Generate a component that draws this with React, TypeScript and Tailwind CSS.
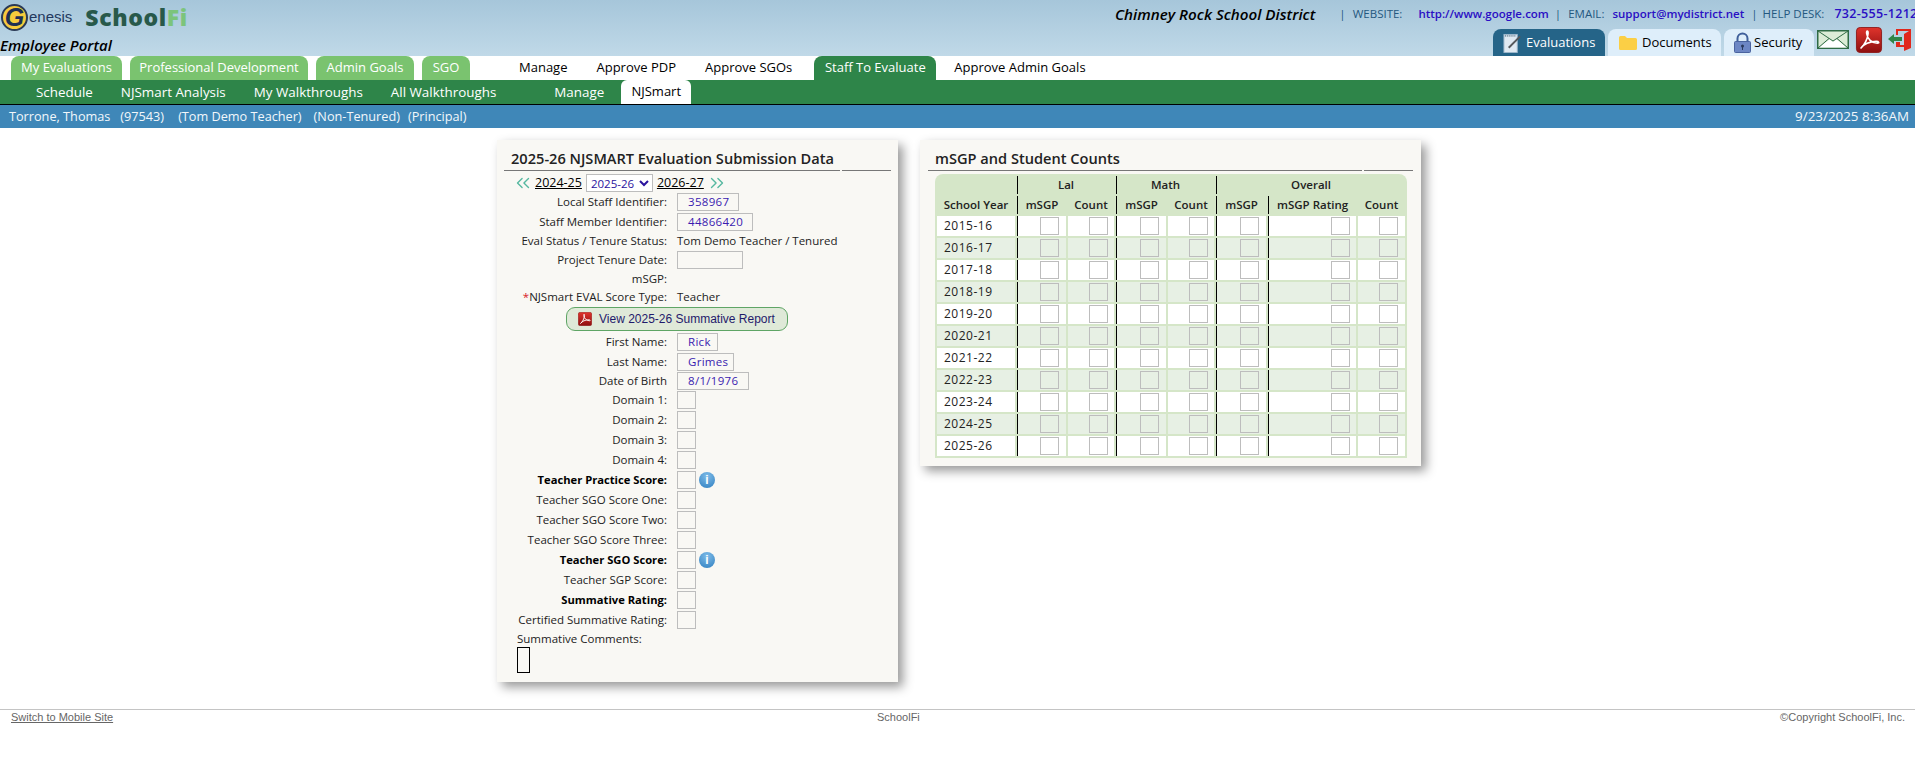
import { ChevronsLeft, ChevronsRight } from "lucide-react";

const body = "font-['Open_Sans',sans-serif]";

const topTabs = [
  { label: "My Evaluations", width: "w-[111px]" },
  { label: "Professional Development", width: "w-[178px]" },
  { label: "Admin Goals", width: "w-[98px]" },
  { label: "SGO", width: "w-[48px]" },
];

const subLinks = ["Schedule", "NJSmart Analysis", "My Walkthroughs", "All Walkthroughs"];

const years = [
  "2015-16", "2016-17", "2017-18", "2018-19", "2019-20", "2020-21",
  "2021-22", "2022-23", "2023-24", "2024-25", "2025-26",
];

const domainRows = [
  { label: "Domain 1:" },
  { label: "Domain 2:" },
  { label: "Domain 3:" },
  { label: "Domain 4:" },
  { label: "Teacher Practice Score:", bold: true, info: true },
  { label: "Teacher SGO Score One:" },
  { label: "Teacher SGO Score Two:" },
  { label: "Teacher SGO Score Three:" },
  { label: "Teacher SGO Score:", bold: true, info: true },
  { label: "Teacher SGP Score:" },
  { label: "Summative Rating:", bold: true },
  { label: "Certified Summative Rating:" },
];

const PdfGlyph = ({ className }: { className: string }) => (
  <svg viewBox="0 0 28 28" className={className}>
    <defs>
      <linearGradient id="pdfRed" x1="0" y1="0" x2="0" y2="1">
        <stop offset="0" stopColor="#e0342c" />
        <stop offset="1" stopColor="#8e0f10" />
      </linearGradient>
    </defs>
    <rect x="0.5" y="0.5" width="27" height="27" rx="4" fill="url(#pdfRed)" stroke="#8c1a1a" />
    <path
      d="M5 23C9 20 12.5 13 13 7C13.2 3.5 11 3.5 11.5 7C12 12.5 17 17.5 23 17.5C25.5 17.5 24.5 15.5 22 15.5C15 15.5 8 18.5 5 23Z"
      fill="none"
      stroke="#fff"
      strokeWidth="1.8"
    />
  </svg>
);

const NoteIcon = () => (
  <svg viewBox="0 0 20 20" className="h-[20px] w-[19px]">
    <rect x="1" y="1" width="14" height="19" fill="#dfe9f2" stroke="#9db7cc" />
    <path d="M2 2.5H14" stroke="#6f8596" strokeWidth="2" strokeDasharray="1 1" />
    <path d="M6 15L18 3" stroke="#55585c" strokeWidth="2" />
  </svg>
);

const FolderIcon = () => (
  <svg viewBox="0 0 18 15" className="h-[15px] w-[18px]">
    <path d="M0 2.5Q0 1 1.5 1H6L8 3H16.5Q18 3 18 4.5V13.5Q18 15 16.5 15H1.5Q0 15 0 13.5Z" fill="#fbcf45" />
  </svg>
);

const LockIcon = () => (
  <svg viewBox="0 0 17 21" className="h-[21px] w-[17px]">
    <path d="M3.5 10V6.5a5 5 0 0 1 10 0V10" fill="none" stroke="#3f5f9a" strokeWidth="2" />
    <rect x="0.5" y="9.5" width="16" height="11" rx="1" fill="#6c86c4" stroke="#4a639f" />
    <circle cx="8.5" cy="14" r="1.5" fill="#2a3a5e" />
    <rect x="8" y="14" width="1" height="4" fill="#2a3a5e" />
  </svg>
);

const EnvelopeIcon = () => (
  <svg viewBox="0 0 32 19" className="h-[19px] w-[32px]">
    <rect x="0.75" y="0.75" width="30.5" height="17.5" fill="#dcecd6" stroke="#2f6b45" strokeWidth="1.5" />
    <path d="M2 17.5L12.5 9.5L16 12L19.5 9.5L30 17.5Z" fill="#fff" />
    <path d="M1 1L16 11L31 1M1 18L12 8.5M31 18L20 8.5" fill="none" stroke="#2f6b45" strokeWidth="1" />
  </svg>
);

const ExitIcon = () => (
  <svg viewBox="0 0 24 24" className="h-[24px] w-[24px]">
    <path d="M10 1H23V20L16 23V6L21 3H10V7H8V1Z" fill="#e0281c" />
    <path d="M10 14H12V17H16V19H8V14Z" fill="#e0281c" />
    <path d="M0 11L6 6V9H14V13H6V16Z" fill="#2f8548" />
  </svg>
);

const InfoIcon = () => (
  <span className="ml-[-7px] flex h-[16px] w-[16px] items-center justify-center rounded-full bg-[radial-gradient(circle_at_50%_25%,#7fbce8,#2f7fc0)] text-[12px] leading-none font-bold text-white font-['Liberation_Sans',sans-serif]">
    i
  </span>
);

const Box = ({ className = "w-[19px]", value }: { className?: string; value?: string }) => (
  <span className={`block h-[18px] border border-[#bdbdbd] pl-[10px] text-[11.5px] leading-[16px] tracking-[0.3px] text-[#3a1bb0] ${className}`}>
    {value}
  </span>
);

const Label = ({ children, bold }: { children: React.ReactNode; bold?: boolean }) => (
  <span className={`w-[163px] shrink-0 text-right whitespace-nowrap text-[#222] ${bold ? "text-[11.2px] font-bold text-black" : ""}`}>
    {children}
  </span>
);

const BoxRow = ({ label, bold, info, boxClass, value }: {
  label: string;
  bold?: boolean;
  info?: boolean;
  boxClass?: string;
  value?: string;
}) => (
  <div className="flex h-[20px] items-center gap-[10px]">
    <Label bold={bold}>{label}</Label>
    <Box className={boxClass} value={value} />
    {info && <InfoIcon />}
  </div>
);

const TextRow = ({ label, value }: { label: React.ReactNode; value?: string }) => (
  <div className="flex h-[18px] items-center gap-[10px]">
    <Label>{label}</Label>
    <span className="whitespace-nowrap text-[#222]">{value}</span>
  </div>
);

const CardTitle = ({ title, wide }: { title: string; wide: string }) => (
  <div className="flex gap-[2px]">
    <div className={`h-[31px] border-b border-[#777] pl-[7px] text-[14.6px] leading-[37px] font-semibold whitespace-nowrap text-[#222] ${wide}`}>
      {title}
    </div>
    <div className="h-[31px] w-[49px] border-b border-[#777]" />
  </div>
);

const EvalCard = () => (
  <section className="h-[542px] w-[401px] bg-[#f9f8f4] px-[7px] text-[11.5px] shadow-[5px_5px_10px_#999]">
    <CardTitle title="2025-26 NJSMART Evaluation Submission Data" wide="w-[336px]" />
    <div className="mt-[3px] flex h-[18px] items-center pl-[8px] text-[12.5px]">
      <ChevronsLeft className="h-[22px] w-[22px] shrink-0 text-[#56b8a0]" strokeWidth={1.5} />
      <a className="ml-px underline">2024-25</a>
      <select defaultValue="2025-26" className="mx-[4px] h-[18px] w-[67px] border border-[#bdbdbd] bg-white p-0 text-[11.5px] text-[#2a139e]">
        <option>2025-26</option>
      </select>
      <a className="underline">2026-27</a>
      <ChevronsRight className="ml-[2px] h-[22px] w-[22px] shrink-0 text-[#56b8a0]" strokeWidth={1.5} />
    </div>
    <BoxRow label="Local Staff Identifier:" boxClass="w-[62px]" value="358967" />
    <BoxRow label="Staff Member Identifier:" boxClass="w-[76px]" value="44866420" />
    <TextRow label="Eval Status / Tenure Status:" value="Tom Demo Teacher / Tenured" />
    <BoxRow label="Project Tenure Date:" boxClass="w-[66px]" />
    <TextRow label="mSGP:" />
    <TextRow label={<><span className="text-[#d8202a]">*</span>NJSmart EVAL Score Type:</>} value="Teacher" />
    <div className="flex h-[26px] items-center pl-[62px]">
      <button className="flex h-[24px] w-[222px] items-center gap-[7px] rounded-[9px] border border-[#5fa565] bg-[#dfe9d8] pl-[11px] text-[12px] text-[#1f1a6b] font-['Liberation_Sans',sans-serif]">
        <PdfGlyph className="h-[14px] w-[14px]" />
        View 2025-26 Summative Report
      </button>
    </div>
    <BoxRow label="First Name:" boxClass="w-[41px]" value="Rick" />
    <BoxRow label="Last Name:" boxClass="w-[57px]" value="Grimes" />
    <div className="flex h-[18px] items-start gap-[10px]">
      <Label>Date of Birth</Label>
      <Box className="w-[72px]" value="8/1/1976" />
    </div>
    {domainRows.map((row) => (
      <BoxRow key={row.label} label={row.label} bold={row.bold} info={row.info} />
    ))}
    <div className="flex h-[17px] items-center pl-[13px] text-[#222]">Summative Comments:</div>
    <div className="ml-[13px] h-[26px] w-[13px] border border-black" />
  </section>
);

const DataCell = ({ border, tight }: { border?: boolean; tight?: boolean }) => (
  <td className={`h-[20px] p-0 align-middle ${tight ? "pr-[6px]" : "pr-[7px]"} ${border ? "border-l border-black" : ""}`}>
    <span className="ml-auto block h-[18px] w-[19px] border border-[#bdbdbd]" />
  </td>
);

const Th = ({ children, border, colSpan }: { children?: React.ReactNode; border?: boolean; colSpan?: number }) => (
  <th colSpan={colSpan} className={`h-[18px] p-0 text-center font-semibold ${border ? "border-l border-black" : ""}`}>
    {children}
  </th>
);

const CountsCard = () => (
  <section className="h-[326px] w-[501px] bg-[#f9f8f4] px-[8px] text-[11.5px] text-[#222] shadow-[5px_5px_10px_#999]">
    <CardTitle title="mSGP and Student Counts" wide="w-[435px]" />
    <table className="mt-[3px] ml-[7px] w-[472px] table-fixed border-separate border-spacing-[2px] rounded-t-[8px] bg-[#d5e6c8]">
      <colgroup>
        <col className="w-[78px]" />
        <col className="w-[49px]" />
        <col className="w-[46px]" />
        <col className="w-[50px]" />
        <col className="w-[46px]" />
        <col className="w-[50px]" />
        <col className="w-[88px]" />
        <col className="w-[47px]" />
      </colgroup>
      <thead>
        <tr>
          <Th />
          <Th border colSpan={2}>Lal</Th>
          <Th border colSpan={2}>Math</Th>
          <Th border colSpan={3}>Overall</Th>
        </tr>
        <tr>
          <Th>School Year</Th>
          <Th border>mSGP</Th>
          <Th>Count</Th>
          <Th border>mSGP</Th>
          <Th>Count</Th>
          <Th border>mSGP</Th>
          <Th border>mSGP Rating</Th>
          <Th>Count</Th>
        </tr>
      </thead>
      <tbody>
        {years.map((year, i) => (
          <tr key={year} className={i % 2 === 0 ? "bg-white" : "bg-[#e7f0e4]"}>
            <td className="h-[20px] p-0 pl-[7px] text-[12px] tracking-[0.5px]">{year}</td>
            <DataCell border />
            <DataCell tight />
            <DataCell border />
            <DataCell tight />
            <DataCell border />
            <DataCell border tight />
            <DataCell />
          </tr>
        ))}
      </tbody>
    </table>
  </section>
);

export default function App() {
  return (
    <div className={`min-h-[768px] overflow-hidden bg-white text-[13px] text-black ${body}`}>
      <header className="flex h-[56px] justify-between overflow-hidden bg-gradient-to-b from-[#a6c6da] to-[#c0d9e8]">
        <div>
          <div className="flex h-[34px] items-center">
            <span className="ml-px flex h-[27px] w-[27px] items-center justify-center rounded-full border-2 border-[#2b3a55] bg-[#f5cb3c] text-[25px] leading-none font-bold italic text-[#1e2f52] font-['Liberation_Sans',sans-serif]">
              G
            </span>
            <span className="ml-px text-[15px] text-[#23395d] font-['Liberation_Sans_Narrow','Liberation_Sans',sans-serif]">enesis</span>
            <span className="ml-[13px] text-[23px] font-extrabold tracking-[0.6px] text-[#28594a]">
              School<span className="text-[#7cc47c]">Fi</span>
            </span>
          </div>
          <div className="text-[15px] leading-[22px] font-semibold italic whitespace-nowrap">Employee Portal</div>
        </div>
        <div className="flex w-[800px] flex-col items-end">
          <div className="flex h-[28px] w-[800px] items-center text-[11.5px] whitespace-nowrap text-[#24587f]">
            <span className="mr-[24px] text-[15.2px] font-semibold italic text-black">Chimney Rock School District</span>
            <span>|</span>
            <span className="ml-[7px]">WEBSITE:</span>
            <a className="ml-[16px] font-semibold text-[#2a0fc4]">http://www.google.com</a>
            <span className="ml-[6px]">|</span>
            <span className="ml-[7px]">EMAIL:</span>
            <a className="ml-[8px] font-semibold text-[#2a0fc4]">support@mydistrict.net</a>
            <span className="ml-[7px]">|</span>
            <span className="ml-[5px]">HELP DESK:</span>
            <a className="ml-[10px] text-[12.5px] font-semibold tracking-[0.3px] text-[#2a0fc4]">732-555-1212</a>
          </div>
          <div className="flex h-[28px] w-[422px] items-end">
            <a className="flex h-[27px] w-[112px] items-center gap-[4px] rounded-t-[8px] bg-[#256488] pl-[10px] font-medium text-white">
              <NoteIcon />
              Evaluations
            </a>
            <a className="ml-[3px] flex h-[27px] w-[113px] items-center gap-[5px] rounded-t-[8px] bg-[#deeefa] pl-[11px]">
              <FolderIcon />
              Documents
            </a>
            <a className="ml-[3px] flex h-[27px] w-[90px] items-center gap-[3px] rounded-t-[8px] bg-[#deeefa] pl-[10px]">
              <LockIcon />
              Security
            </a>
            <span className="mb-[7px] ml-[3px]"><EnvelopeIcon /></span>
            <span className="mb-[3px] ml-[6px]"><PdfGlyph className="h-[26px] w-[28px]" /></span>
            <span className="mb-[4px] ml-[5px]"><ExitIcon /></span>
          </div>
        </div>
      </header>

      <nav className="flex h-[24px] font-medium whitespace-nowrap">
        <div className="ml-[11px] flex gap-[8px]">
          {topTabs.map((tab) => (
            <a key={tab.label} className={`flex items-center justify-center rounded-t-[8px] bg-[#7ac36f] text-white ${tab.width}`}>
              {tab.label}
            </a>
          ))}
        </div>
        <div className="ml-[49px] flex items-center gap-[29px]">
          <a>Manage</a>
          <a>Approve PDP</a>
          <a>Approve SGOs</a>
        </div>
        <a className="ml-[22px] flex w-[122px] items-center justify-center rounded-t-[8px] bg-[#2e8549] text-white">Staff To Evaluate</a>
        <a className="ml-[18px] flex items-center">Approve Admin Goals</a>
      </nav>

      <nav className="flex h-[25px] items-end border-b border-black bg-[#2e8549] pl-[36px] text-[13.4px] font-medium whitespace-nowrap text-white">
        <div className="flex h-[24px] items-center gap-[28px]">
          {subLinks.map((link) => (
            <a key={link}>{link}</a>
          ))}
          <a className="ml-[30px]">Manage</a>
        </div>
        <a className="ml-[17px] flex h-[24px] w-[70px] items-center justify-center rounded-t-[6px] bg-white text-[13px] text-black">NJSmart</a>
      </nav>

      <div className="flex h-[23px] items-center justify-between bg-[#3f87b8] px-[6px] text-[12.7px] text-[#f2f7fb] whitespace-nowrap">
        <div className="ml-[3px] flex gap-[12px]">
          <span className="mr-[-2px]">Torrone, Thomas</span>
          <span className="mr-[2px]">(97543)</span>
          <span>(Tom Demo Teacher)</span>
          <span>(Non-Tenured)</span>
          <span className="ml-[-4px]">(Principal)</span>
        </div>
        <span className="text-[13.4px]">9/23/2025 8:36AM</span>
      </div>

      <main className="flex h-[581px] items-start pt-[12px] pl-[497px]">
        <EvalCard />
        <div className="ml-[22px]">
          <CountsCard />
        </div>
      </main>

      <footer className="grid grid-cols-[866px_1fr_auto] border-t border-[#c4c4c4] pr-[10px] pl-[11px] text-[11px] leading-[14px] text-[#666] font-['Liberation_Sans',sans-serif]">
        <span><a className="underline">Switch to Mobile Site</a></span>
        <span>SchoolFi</span>
        <span>©Copyright SchoolFi, Inc.</span>
      </footer>
    </div>
  );
}
